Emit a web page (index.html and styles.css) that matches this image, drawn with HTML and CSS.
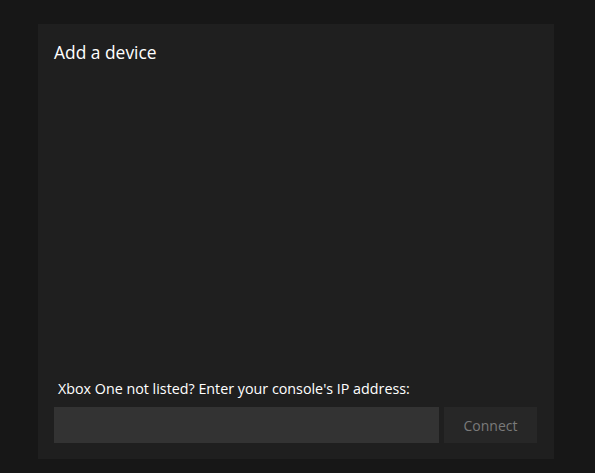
FILE: index.html
```html
<!DOCTYPE html>
<html>
<head>
<meta charset="utf-8">
<link rel="stylesheet" href="styles.css">
</head>
<body>
<div class="page">
  <div class="panel">
    <h1 class="title">Add a device</h1>
    <div class="spacer"></div>
    <p class="label">Xbox One not listed? Enter your console's IP address:</p>
    <div class="row">
      <input class="ip" type="text">
      <button class="connect">Connect</button>
    </div>
  </div>
</div>
</body>
</html>
```
FILE: styles.css
```css
html, body {
  margin: 0;
  padding: 0;
  background: #171717;
  width: 595px;
  height: 473px;
  overflow: hidden;
}
.page {
  padding: 24px 41px 14px 38px;
  box-sizing: border-box;
  height: 473px;
}
.panel {
  background: #1f1f1f;
  width: 516px;
  height: 435px;
  box-sizing: border-box;
  padding: 0 16px 16px 16px;
  display: flex;
  flex-direction: column;
  font-family: "Open Sans", "Noto Sans", sans-serif;
}
.title {
  margin: 0;
  padding-top: 14px;
  font-size: 17.4px;
  font-weight: 400;
  line-height: 28px;
  color: #ffffff;
}
.spacer { flex: 1; }
.label {
  margin: 0 0 8px 4px;
  font-size: 14.3px;
  line-height: 20px;
  color: #ffffff;
}
.row {
  display: flex;
  gap: 5px;
  height: 36px;
}
.ip {
  width: 385px;
  height: 36px;
  box-sizing: border-box;
  background: #333333;
  border: none;
  outline: none;
  margin: 0;
  padding: 0 8px;
}
.connect {
  width: 93px;
  height: 36px;
  background: #272727;
  border: none;
  margin: 0;
  color: #7a7a7a;
  font-family: "Open Sans", "Noto Sans", sans-serif;
  font-size: 14px;
  padding: 0;
}
```
